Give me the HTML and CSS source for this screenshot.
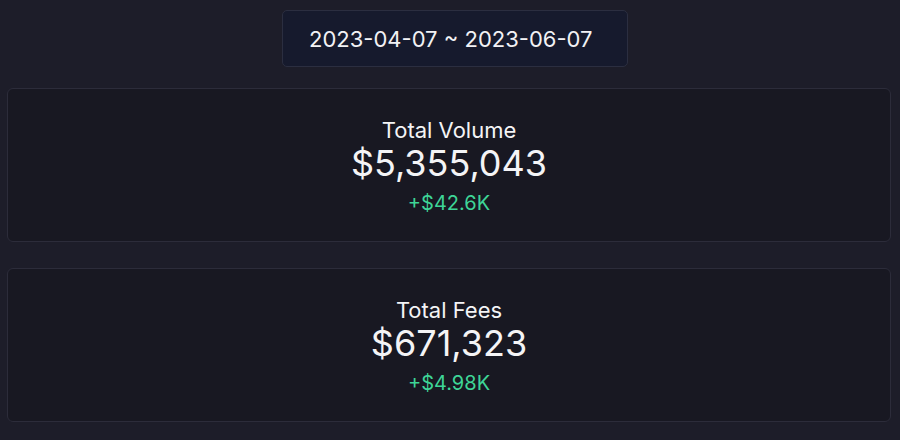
FILE: index.html
```html
<!DOCTYPE html>
<html lang="en">
<head>
<meta charset="utf-8">
<title>Stats</title>
<link rel="stylesheet" href="styles.css">
</head>
<body>
<div class="page">
  <div class="range-row">
    <div class="range">2023-04-07 ~ 2023-06-07</div>
  </div>
  <div class="card">
    <div class="label">Total Volume</div>
    <div class="value">$5,355,043</div>
    <div class="delta">+$42.6K</div>
  </div>
  <div class="card">
    <div class="label">Total Fees</div>
    <div class="value">$671,323</div>
    <div class="delta">+$4.98K</div>
  </div>
</div>
</body>
</html>
```
FILE: styles.css
```css
html, body {
  margin: 0;
  padding: 0;
  background: #1d1d29;
  font-family: Inter, "Noto Sans", sans-serif;
  color: #f4f4f6;
}
.page {
  padding: 10px 9px 0 7px;
  display: flex;
  flex-direction: column;
  gap: 26px;
}
.range-row {
  display: flex;
  justify-content: center;
  padding-left: 12px;
  margin-bottom: -5px;
}
.range {
  box-sizing: border-box;
  width: 346px;
  height: 57px;
  padding-left: 26px;
  display: flex;
  align-items: center;
  background: #161a2d;
  border: 1px solid #2b2e40;
  border-radius: 5px;
  font-size: 22px;
  color: #f2f2f5;
}
.card {
  box-sizing: border-box;
  height: 154px;
  padding-top: 1px;
  background: #181822;
  border: 1px solid #2c2c3a;
  border-radius: 6px;
  display: flex;
  flex-direction: column;
  align-items: center;
  justify-content: center;
}
.label {
  font-size: 22px;
  line-height: 26px;
}
.value {
  font-size: 36px;
  line-height: 40px;
}
.delta {
  margin-top: 8px;
  font-size: 20px;
  line-height: 24px;
  color: #3ed597;
}
```
